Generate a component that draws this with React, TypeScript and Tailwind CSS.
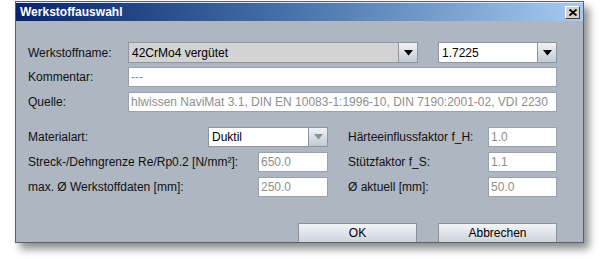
const font = { fontFamily: '"Liberation Sans", Arial, sans-serif' };

const Arrow = ({ disabled }: { disabled?: boolean }) => (
  <svg width="9" height="6" viewBox="0 0 9 6">
    <path d="M0 0 H9 L4.5 5.5 Z" fill={disabled ? "#8a8f96" : "#000"} />
  </svg>
);

const Combo = ({
  value,
  className,
  bg = "bg-white",
  disabled,
}: {
  value: string;
  className: string;
  bg?: string;
  disabled?: boolean;
}) => (
  <div className={`flex border border-[#8d959f] ${bg} ${className}`}>
    <div className="flex-1 flex items-center pl-[3px] text-black truncate">{value}</div>
    <div className="w-[19px] flex items-center justify-center border-l border-[#8d959f] bg-gradient-to-b from-[#f1f3f6] to-[#c3cad3]">
      <Arrow disabled={disabled} />
    </div>
  </div>
);

const Field = ({ value, className }: { value: string; className: string }) => (
  <div className={`h-[20px] flex items-center pl-[2px] bg-white border border-[#9aa1aa] text-[#8e8e8e] whitespace-nowrap overflow-hidden ${className}`}>
    {value}
  </div>
);

const Label = ({ children, className = "" }: { children: React.ReactNode; className?: string }) => (
  <div className={`h-[20px] flex items-center text-[#111] whitespace-nowrap ${className}`}>{children}</div>
);

const Button = ({ children }: { children: React.ReactNode }) => (
  <button className="w-[119px] h-[24px] shrink-0 border border-[#8a929c] bg-gradient-to-b from-[#f2f4f7] to-[#c6cdd6] text-black text-[12px] pb-[4px]">
    {children}
  </button>
);

export default function App() {
  return (
    <div className="w-[600px] h-[259px] bg-white overflow-hidden text-[12px]" style={font}>
      <div className="ml-[15px] mt-[1px] w-[569px] h-[242px] border border-[#5d6168] bg-[#e4e6e9] pt-[1px] shadow-[5px_6px_8px_rgba(0,0,0,0.45)] overflow-hidden flex flex-col">
        {/* title bar */}
        <div className="h-[18px] shrink-0 flex items-center justify-between bg-gradient-to-r from-[#0a246a] via-[#4a75ab] to-[#a6caf0] pl-[4px] pr-[3px]">
          <span className="text-white font-bold text-[12px] leading-none">Werkstoffauswahl</span>
          <div className="w-[15px] h-[13px] bg-[#d4d0c8] border border-t-white border-l-white border-r-[#404040] border-b-[#404040] flex items-center justify-center">
            <svg width="8" height="7" viewBox="0 0 8 7">
              <path d="M0.5 0.5 L7.5 6.5 M7.5 0.5 L0.5 6.5" stroke="#000" strokeWidth="1.8" />
            </svg>
          </div>
        </div>

        {/* content */}
        <div className="flex-1 min-h-0 bg-[#adb6c1] pl-[12px] pt-[21px] flex flex-col">
          <div className="flex items-center h-[21px]">
            <Label className="w-[100px]">Werkstoffname:</Label>
            <Combo value="42CrMo4 vergütet" className="w-[290px] h-[21px]" bg="bg-[#d3d3d3]" />
            <Combo value="1.7225" className="w-[119px] h-[21px] ml-[20px]" />
          </div>
          <div className="flex items-center mt-[4px]">
            <Label className="w-[100px]">Kommentar:</Label>
            <Field value="---" className="w-[429px]" />
          </div>
          <div className="flex items-center mt-[5px]">
            <Label className="w-[100px]">Quelle:</Label>
            <Field value="hlwissen NaviMat 3.1, DIN EN 10083-1:1996-10, DIN 7190:2001-02, VDI 2230" className="w-[429px]" />
          </div>

          <div className="flex mt-[15px]">
            <div className="flex flex-col gap-[5px] w-[320px]">
              <div className="flex items-center">
                <Label className="w-[180px]">Materialart:</Label>
                <Combo value="Duktil" className="w-[120px] h-[20px]" disabled />
              </div>
              <div className="flex items-center">
                <Label className="w-[230px]">Streck-/Dehngrenze Re/Rp0.2 [N/mm²]:</Label>
                <Field value="650.0" className="w-[70px]" />
              </div>
              <div className="flex items-center">
                <Label className="w-[230px]">max. Ø Werkstoffdaten [mm]:</Label>
                <Field value="250.0" className="w-[70px]" />
              </div>
            </div>
            <div className="flex flex-col gap-[5px]">
              <div className="flex items-center">
                <Label className="w-[140px]">Härteeinflussfaktor f_H:</Label>
                <Field value="1.0" className="w-[69px]" />
              </div>
              <div className="flex items-center">
                <Label className="w-[140px]">Stützfaktor f_S:</Label>
                <Field value="1.1" className="w-[69px]" />
              </div>
              <div className="flex items-center">
                <Label className="w-[140px]">Ø aktuell [mm]:</Label>
                <Field value="50.0" className="w-[69px]" />
              </div>
            </div>
          </div>

          <div className="flex gap-[21px] ml-[270px] mt-[26px]">
            <Button>OK</Button>
            <Button>Abbrechen</Button>
          </div>
        </div>
      </div>
    </div>
  );
}
